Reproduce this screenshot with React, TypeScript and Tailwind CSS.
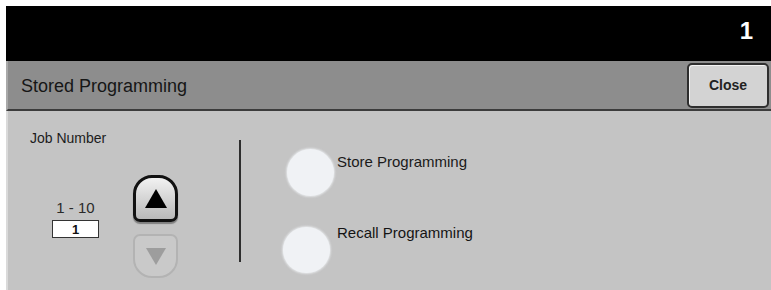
import React from "react";

export default function App() {
  const font = { fontFamily: '"Liberation Sans", Arial, sans-serif' };
  return (
    <div className="w-[771px] h-[290px] bg-white pt-[6px] pl-[6px] flex flex-col overflow-hidden" style={font}>
      {/* black status bar */}
      <div className="h-[55px] bg-black flex items-center justify-end pr-[18px] pb-[6px] shrink-0">
        <span className="text-white text-[24px] font-bold leading-none">1</span>
      </div>
      {/* header */}
      <div className="h-[50px] shrink-0 bg-[#8d8d8d] border-l-2 border-l-[#a9a9a9] border-b-2 border-b-[#3c3c3c] flex items-start justify-between">
        <span className="text-[18px] leading-[22px] text-[#161616] pl-[13px] mt-[14px]">Stored Programming</span>
        <button className="mt-[2px] mr-[2px] w-[82px] h-[45px] rounded-[5px] border-2 border-[#2e2e2e] bg-[#d3d3d3] shadow-[inset_1px_1px_0_#f4f4f4] flex items-center justify-center text-[14px] font-bold text-[#222]">
          Close
        </button>
      </div>
      {/* body */}
      <div className="flex-1 bg-[#c4c4c4] border-l-2 border-l-[#dadada] flex">
        {/* left section */}
        <div className="w-[231px] shrink-0 pl-[22px] pt-[19px] flex flex-col">
          <span className="text-[14px] leading-[16px] text-[#1c1c1c]">Job Number</span>
          <div className="flex items-start mt-[29px]">
            <div className="w-[47px] ml-[22px] mt-[24px] flex flex-col items-center">
              <span className="text-[15px] leading-[18px] text-[#2a2a2a]">1 - 10</span>
              <div className="mt-[3px] w-[47px] h-[18px] bg-white border border-[#333] flex items-center justify-center text-[13px] font-bold text-[#111] leading-none">
                1
              </div>
            </div>
            <div className="ml-[34px] flex flex-col">
              <button className="w-[45px] h-[47px] rounded-t-[19px] rounded-b-[7px] border-[3px] border-[#111] bg-gradient-to-b from-[#f2f2f2] to-[#b9b9b9] shadow-[0_2px_1px_rgba(0,0,0,0.35)] flex items-center justify-center">
                <svg width="24" height="21" viewBox="0 0 24 21">
                  <polygon points="12,1 23,20 1,20" fill="#000" />
                </svg>
              </button>
              <button className="mt-[12px] w-[45px] h-[44px] rounded-t-[7px] rounded-b-[19px] border-2 border-[#b3b3b3] bg-[#c9c9c9] flex items-center justify-center">
                <svg width="22" height="19" viewBox="0 0 22 19">
                  <polygon points="1,1 21,1 11,18" fill="#9d9d9d" />
                </svg>
              </button>
            </div>
          </div>
        </div>
        {/* divider */}
        <div className="w-[2px] h-[122px] mt-[29px] bg-[#2e2e2e] shrink-0" />
        {/* right section */}
        <div className="flex flex-col pt-[38px]">
          <div className="flex items-start">
            <div className="ml-[46px] w-[47px] h-[47px] rounded-full bg-[#f0f2f5] shadow-[0_0_2px_1px_rgba(240,242,245,0.7)]" />
            <span className="ml-[3px] mt-[4px] text-[15px] leading-[18px] text-[#1a1a1a]">Store Programming</span>
          </div>
          <div className="flex items-start mt-[28px]">
            <div className="ml-[42px] mt-[3px] w-[47px] h-[46px] rounded-full bg-[#f0f2f5] shadow-[0_0_2px_1px_rgba(240,242,245,0.7)]" />
            <span className="ml-[7px] text-[15px] leading-[18px] text-[#141414]">Recall Programming</span>
          </div>
        </div>
      </div>
    </div>
  );
}
